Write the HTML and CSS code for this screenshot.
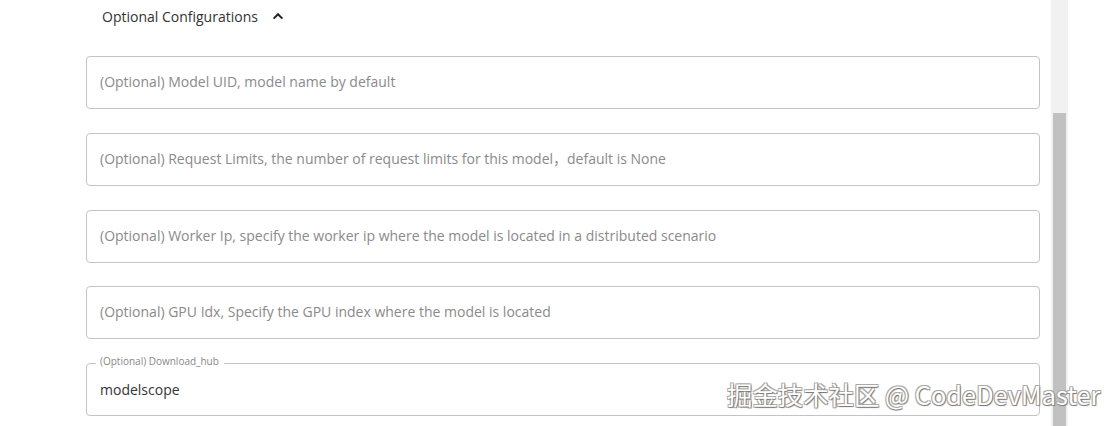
FILE: index.html
```html
<!DOCTYPE html>
<html>
<head>
<meta charset="utf-8">
<link rel="stylesheet" href="styles.css">
</head>
<body>
<div class="page">
  <main class="main">
    <div class="section-head">
      <span class="section-title">Optional Configurations</span>
      <svg class="chev" width="14" height="14" viewBox="0 0 24 24"><path d="M4.5 16.5 12 9l7.5 7.5" fill="none" stroke="#222" stroke-width="3.4"/></svg>
    </div>
    <div class="fields">
      <div class="field"><span class="ph">(Optional) Model UID, model name by default</span></div>
      <div class="field"><span class="ph">(Optional) Request Limits, the number of request limits for this model，default is None</span></div>
      <div class="field"><span class="ph">(Optional) Worker Ip, specify the worker ip where the model is located in a distributed scenario</span></div>
      <div class="field"><span class="ph">(Optional) GPU Idx, Specify the GPU index where the model is located</span></div>
      <div class="field filled">
        <span class="legend">(Optional) Download_hub</span>
        <span class="val">modelscope</span>
      </div>
    </div>
  </main>
  <div class="scrollbar"><div class="thumb"></div></div>
  <div class="gutter"></div>
</div>
<div class="watermark">掘金技术社区 @ CodeDevMaster</div>
</body>
</html>
```
FILE: styles.css
```css
html, body {
  margin: 0;
  padding: 0;
  background: #fff;
  height: 426px;
  overflow: hidden;
  font-family: "Open Sans", "Noto Sans", "Noto Sans CJK SC", sans-serif;
}
.page {
  display: flex;
  height: 426px;
}
.main {
  width: 954px;
  padding-left: 86px;
}
.section-head {
  display: flex;
  align-items: center;
  height: 32px;
  padding-left: 16px;
  gap: 13px;
}
.section-title {
  font-size: 14px;
  color: #333;
}
.chev { margin-top: -1px; }
.fields {
  display: flex;
  flex-direction: column;
  gap: 23.75px;
  margin-top: 24px;
}
.field {
  box-sizing: border-box;
  height: 53px;
  border: 1px solid #c4c4c4;
  border-radius: 4px;
  display: flex;
  align-items: center;
  padding: 0 13px;
}
.ph {
  font-size: 14px;
  color: #8a8a8a;
  margin-top: -2px;
}
.filled {
  position: relative;
}
.legend {
  position: absolute;
  top: -10px;
  left: 9px;
  padding: 0 5px 0 4px;
  background: #fff;
  font-size: 10px;
  color: #888;
  line-height: 14px;
}
.val {
  font-size: 14px;
  color: #333;
  margin-top: -1px;
}
.scrollbar {
  margin-left: 11px;
  width: 17px;
  background: #f1f1f1;
  position: relative;
}
.thumb {
  position: absolute;
  left: 2px;
  right: 2px;
  top: 113px;
  bottom: 0;
  background: #c1c1c1;
}
.gutter { flex: 1; }
.watermark {
  position: absolute;
  left: 727px;
  top: 376px;
  font-size: 25.4px;
  color: #fff;
  font-family: "Noto Sans CJK SC", sans-serif;
  text-shadow: 1px 1px 1px #777, -1px -1px 0 #aaa, 1px -1px 0 #aaa, -1px 1px 0 #aaa;
  white-space: nowrap;
}
```
